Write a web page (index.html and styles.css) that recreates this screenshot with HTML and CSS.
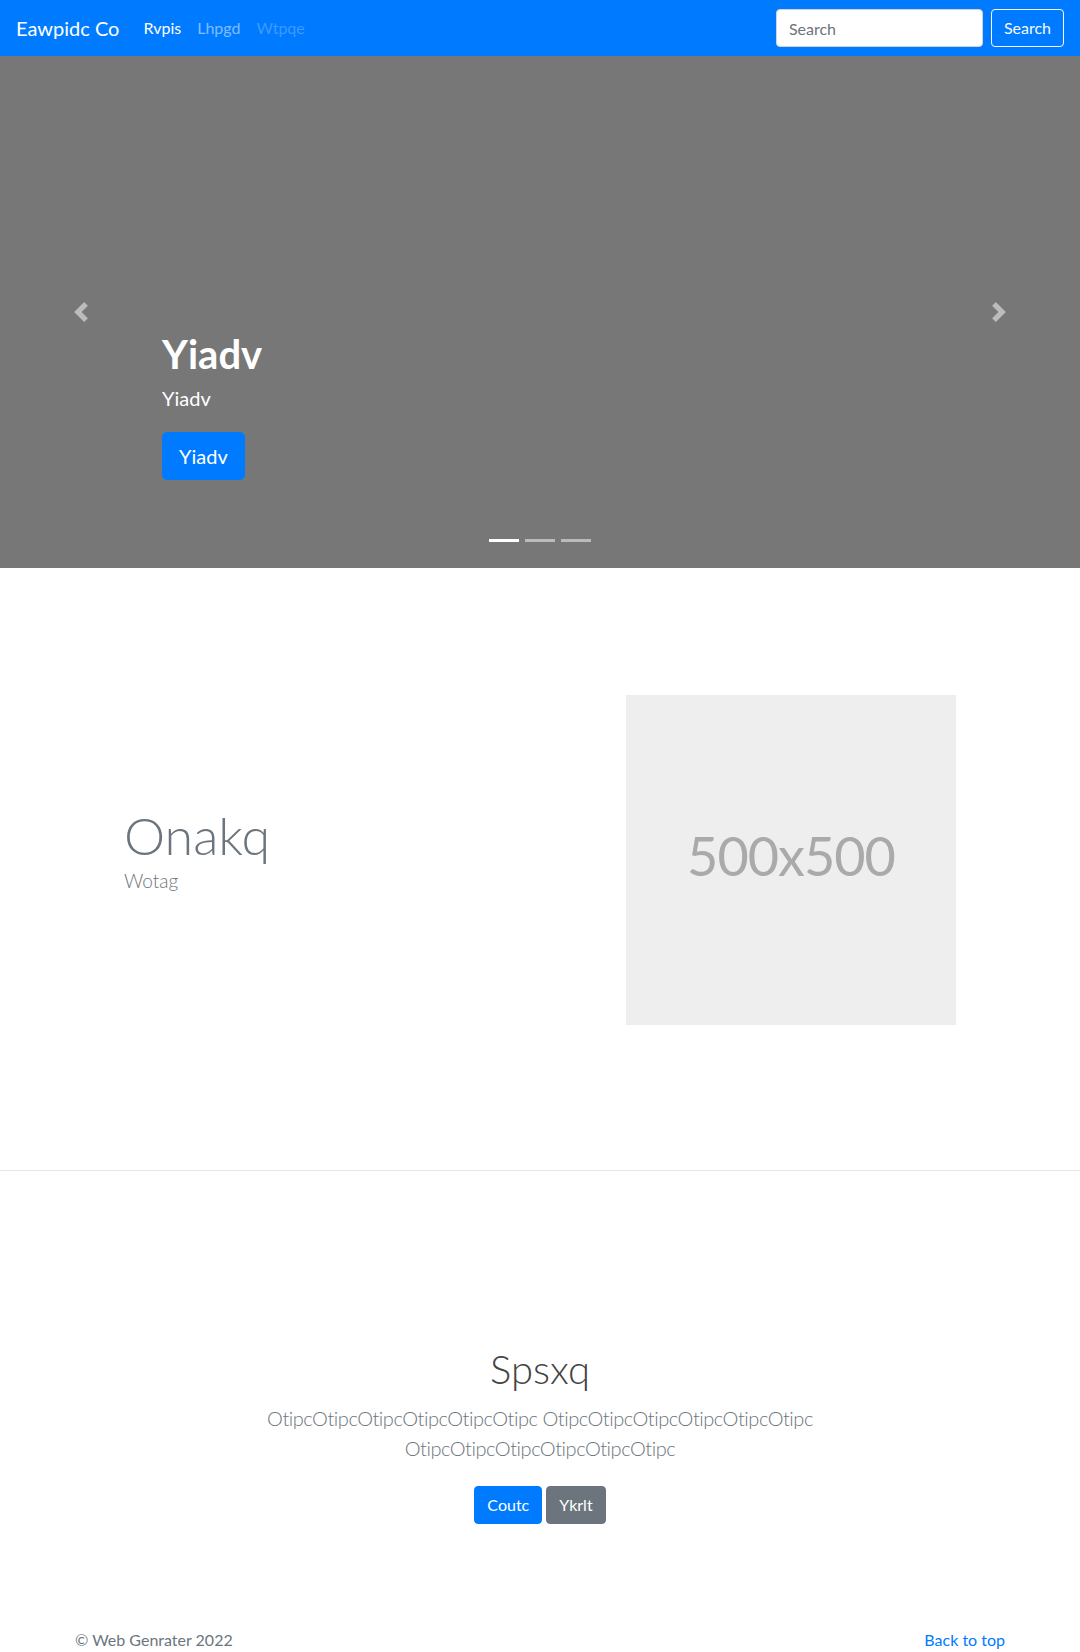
FILE: index.html
```html
<!DOCTYPE html>
<html lang="en">
<head>
<meta charset="utf-8">
<title>Eawpidc Co</title>
<link rel="stylesheet" href="styles.css">
</head>
<body>
<header class="navbar">
  <a class="brand" href="#">Eawpidc Co</a>
  <ul class="nav">
    <li><a class="nav-link active" href="#">Rvpis</a></li>
    <li><a class="nav-link" href="#">Lhpgd</a></li>
    <li><a class="nav-link disabled" href="#">Wtpqe</a></li>
  </ul>
  <form class="search">
    <input class="search-input" type="search" placeholder="Search">
    <button class="btn-outline" type="button">Search</button>
  </form>
</header>

<section class="carousel">
  <div class="caption">
    <h1 class="caption-title">Yiadv</h1>
    <p class="caption-text">Yiadv</p>
    <p class="caption-action"><a class="btn btn-lg btn-primary" href="#">Yiadv</a></p>
  </div>
  <a class="control prev" href="#" aria-label="Previous">
    <svg viewBox="0 0 8 8" fill="#fff"><path d="M5.25 0l-4 4 4 4 1.5-1.5L4.25 4l2.5-2.5L5.25 0z"/></svg>
  </a>
  <a class="control next" href="#" aria-label="Next">
    <svg viewBox="0 0 8 8" fill="#fff"><path d="M2.75 0l-1.5 1.5L3.75 4l-2.5 2.5L2.75 8l4-4-4-4z"/></svg>
  </a>
  <ol class="indicators">
    <li class="active"></li>
    <li></li>
    <li></li>
  </ol>
</section>

<section class="featurette">
  <div class="featurette-text">
    <h2 class="featurette-heading">Onakq</h2>
    <p class="featurette-sub">Wotag</p>
  </div>
  <div class="placeholder">500x500</div>
</section>

<hr class="divider">

<section class="jumbo">
  <div class="jumbo-inner">
    <h1 class="jumbo-title">Spsxq</h1>
    <p class="lead">OtipcOtipcOtipcOtipcOtipcOtipc OtipcOtipcOtipcOtipcOtipcOtipc OtipcOtipcOtipcOtipcOtipcOtipc</p>
    <p class="actions">
      <a class="btn btn-primary" href="#">Coutc</a>
      <a class="btn btn-secondary" href="#">Ykrlt</a>
    </p>
  </div>
</section>

<footer class="footer">
  <p class="copy">© Web Genrater 2022</p>
  <p class="back"><a href="#">Back to top</a></p>
</footer>
</body>
</html>
```

FILE: styles.css
```css
* { box-sizing: border-box; }
html, body { margin: 0; padding: 0; }
body {
  font-family: Lato, "Open Sans", sans-serif;
  font-size: 16px;
  line-height: 1.5;
  color: #212529;
  background: #fff;
}

/* navbar */
.navbar {
  display: flex;
  align-items: center;
  height: 56px;
  padding: 0 16px;
  background: #007bff;
}
.brand {
  font-size: 20px;
  line-height: 30px;
  color: #fff;
  margin-right: 16px;
  text-decoration: none;
}
.nav {
  display: flex;
  flex: 1;
  list-style: none;
  margin: 0;
  padding: 0;
}
.nav-link {
  display: block;
  padding: 8px;
  color: rgba(255, 255, 255, .5);
  text-decoration: none;
}
.nav-link.active { color: #fff; }
.nav-link.disabled { color: rgba(255, 255, 255, .25); }
.search {
  display: flex;
  gap: 8px;
  margin: 0;
}
.search-input {
  width: 207px;
  height: 38px;
  padding: 6px 12px;
  font: inherit;
  color: #495057;
  background: #fff;
  border: 1px solid #ced4da;
  border-radius: 4px;
}
.search-input::placeholder { color: #6c757d; }
.btn-outline {
  height: 38px;
  padding: 6px 12px;
  font: inherit;
  color: #f8f9fa;
  background: transparent;
  border: 1px solid #f8f9fa;
  border-radius: 4px;
}

/* carousel */
.carousel {
  position: relative;
  height: 512px;
  background: #777;
  display: flex;
  flex-direction: column;
  justify-content: flex-end;
  padding: 0 15% 88px;
}
.caption { color: #fff; }
.caption-title {
  font-size: 40px;
  font-weight: 700;
  line-height: 1.2;
  margin: 0 0 5px;
}
.caption-text {
  font-size: 20px;
  line-height: 1.5;
  margin: 0 0 19px;
}
.caption-action { margin: 0; }
.control {
  position: absolute;
  top: 0;
  bottom: 0;
  width: 15%;
  display: flex;
  align-items: center;
  justify-content: center;
  opacity: .5;
}
.control svg { width: 20px; height: 20px; display: block; }
.prev { left: 0; }
.next { right: 0; }
.indicators {
  position: absolute;
  left: 0;
  right: 0;
  bottom: 16px;
  display: flex;
  justify-content: center;
  list-style: none;
  margin: 0;
  padding: 0;
}
.indicators li {
  width: 30px;
  height: 23px;
  margin: 0 3px;
  background: #fff;
  background-clip: padding-box;
  border-top: 10px solid transparent;
  border-bottom: 10px solid transparent;
  opacity: .5;
}
.indicators li.active { opacity: 1; }

/* buttons */
.btn {
  display: inline-block;
  padding: 6px 12px;
  font-size: 16px;
  line-height: 1.5;
  color: #fff;
  text-decoration: none;
  border: 1px solid transparent;
  border-radius: 4px;
}
.btn-lg {
  padding: 8px 16px;
  font-size: 20px;
  line-height: 30px;
  border-radius: 5px;
}
.btn-primary { background: #007bff; border-color: #007bff; }
.btn-secondary { background: #6c757d; border-color: #6c757d; }

/* featurette */
.featurette {
  width: 832px;
  margin: 127px auto 0;
  display: flex;
  align-items: center;
  justify-content: space-between;
}
.featurette-text { padding-bottom: 23px; }
.featurette-heading {
  font-size: 52px;
  font-weight: 300;
  line-height: 1.2;
  color: #6c757d;
  margin: 0 0 4px;
}
.featurette-sub {
  font-size: 19px;
  font-weight: 300;
  line-height: 1.2;
  color: #6c757d;
  margin: 0;
}
.placeholder {
  width: 330px;
  height: 330px;
  padding-bottom: 10px;
  background: #eee;
  color: #aaa;
  font-size: 54px;
  letter-spacing: -1px;
  display: flex;
  align-items: center;
  justify-content: center;
}

.divider {
  border: 0;
  border-top: 1px solid rgba(0, 0, 0, .1);
  margin: 145px 0 0;
}

/* jumbotron */
.jumbo {
  text-align: center;
  padding: 174px 0 48px;
}
.jumbo-inner {
  max-width: 640px;
  margin: 0 auto;
  padding: 0 15px;
}
.jumbo-title {
  font-size: 40px;
  font-weight: 300;
  line-height: 1.2;
  color: #444;
  margin: 0 0 10px;
}
.lead {
  font-size: 20px;
  font-weight: 300;
  line-height: 1.5;
  letter-spacing: -0.45px;
  color: #6c757d;
  margin: 0 0 15px;
}
.actions {
  display: flex;
  justify-content: center;
  gap: 4px;
  margin: 0;
  padding: 8px 0;
}

/* footer */
.footer {
  width: 960px;
  margin: 0 auto;
  padding: 48px 15px 48px;
  display: flex;
  justify-content: space-between;
  color: #6c757d;
}
.footer p { margin: 0; }
.footer a { color: #007bff; text-decoration: none; }
```
